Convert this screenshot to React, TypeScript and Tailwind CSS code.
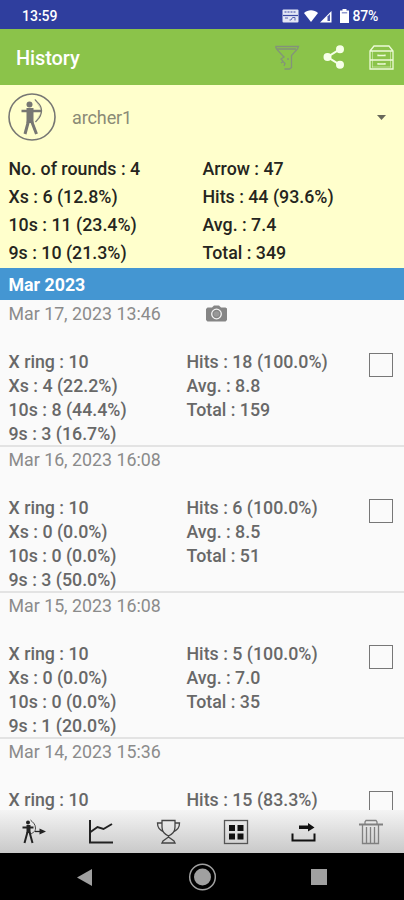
import type { ReactNode } from "react";

interface Round {
  date: string;
  photo?: boolean;
  left: string[];
  right: string[];
}

const rounds: Round[] = [
  {
    date: "Mar 17, 2023 13:46",
    photo: true,
    left: ["X ring : 10", "Xs : 4 (22.2%)", "10s : 8 (44.4%)", "9s : 3 (16.7%)"],
    right: ["Hits : 18 (100.0%)", "Avg. : 8.8", "Total : 159"],
  },
  {
    date: "Mar 16, 2023 16:08",
    left: ["X ring : 10", "Xs : 0 (0.0%)", "10s : 0 (0.0%)", "9s : 3 (50.0%)"],
    right: ["Hits : 6 (100.0%)", "Avg. : 8.5", "Total : 51"],
  },
  {
    date: "Mar 15, 2023 16:08",
    left: ["X ring : 10", "Xs : 0 (0.0%)", "10s : 0 (0.0%)", "9s : 1 (20.0%)"],
    right: ["Hits : 5 (100.0%)", "Avg. : 7.0", "Total : 35"],
  },
  {
    date: "Mar 14, 2023 15:36",
    left: ["X ring : 10"],
    right: ["Hits : 15 (83.3%)"],
  },
];

const summaryLeft = ["No. of rounds : 4", "Xs : 6 (12.8%)", "10s : 11 (23.4%)", "9s : 10 (21.3%)"];
const summaryRight = ["Arrow : 47", "Hits : 44 (93.6%)", "Avg. : 7.4", "Total : 349"];

function StatusBar() {
  return (
    <header className="flex h-[29px] shrink-0 items-center justify-between bg-[#2f3e9e] pt-[3px] pr-[26px] pl-[22px] text-[14px] font-medium text-white">
      <span>13:59</span>
      <div className="flex items-center">
        <svg className="mt-[-1px] h-[14px] w-[17px]" viewBox="0 0 17 14">
          <rect x=".5" y=".5" width="16" height="13" rx="1" fill="#e4e7f5" />
          <path d="M2.500 3h12" stroke="#6f79bd" strokeWidth="1.500" strokeDasharray="2 1" />
          <path d="M1 6.500h15" stroke="#3c4aa4" strokeWidth="1.200" />
          <path d="M3 9h3M7.500 11h1.500l1.500-2.500h2.500v3" stroke="#5863b2" fill="none" />
        </svg>
        <svg className="ml-[5px] h-[13px] w-[28px]" viewBox="0 0 28 13">
          <path d="M0 3C4-.8 10-.8 14 3L7 12Z" fill="#fff" />
          <path d="M16 12.500 27.500 1v11.500Z" fill="#fff" />
          <path d="M23.500 6.500v4.500h2.500V4Z" fill="#4b58ab" />
        </svg>
        <svg className="ml-[8px] h-[14px] w-[9px]" viewBox="0 0 9 14">
          <path d="M2.500 0h4v1.500H9V14H0V1.500h2.500Z" fill="#fff" />
          <path d="M1.800 3h5.400v1.500H1.800z" fill="#929bd0" />
        </svg>
        <span className="ml-[3px] tracking-[-0.2px]">87%</span>
      </div>
    </header>
  );
}

function Toolbar() {
  return (
    <div className="flex h-[56px] shrink-0 items-center bg-[#8bc34a] pr-[10px] pl-4">
      <h1 className="mt-[1px] grow text-[20px] font-medium tracking-[-0.1px] text-white">History</h1>
      <svg className="h-[25px] w-[26px]" viewBox="0 0 26 25" fill="none" stroke="#83937a" strokeWidth="1.300">
        <path d="M1.500 1.500h23l-1 2.500-6 6.500v12l-2 1.500h-5M1.500 1.500l1 2.500 5.500 6M3 4h19" />
        <path d="M8 10l2 2-3 2 2 2M7 18l2-1.500 2 2-1 2.500M14 13v2" />
      </svg>
      <svg className="ml-[23px] h-[24px] w-[21px]" viewBox="0 0 21 24" fill="#f6ffe8" stroke="#f6ffe8" strokeWidth="2">
        <path d="M17 4.200 4.500 12 17 19.800" fill="none" />
        <circle cx="17" cy="4.200" r="3" />
        <circle cx="4.500" cy="12" r="3" />
        <circle cx="17" cy="19.800" r="3" />
      </svg>
      <svg className="ml-[25px] h-[25px] w-[25px]" viewBox="0 0 25 25" fill="none" stroke="#edfad8" strokeWidth="1.300">
        <path d="M1 6 5 1h15l4 5v18H1ZM1 6h23M1 15h23" />
        <path d="M3.500 6v16.500M21.500 6v16.500M3 22h19" strokeWidth=".5" />
        <path d="M9 9.500v1h7v-1M9 18v1h7v-1" />
      </svg>
    </div>
  );
}

function Summary() {
  return (
    <section className="h-[183px] shrink-0 bg-[#ffffcc]">
      <div className="flex h-[70px] items-center pr-[18px] pl-2">
        <svg className="mt-[-7px] h-[48px] w-[48px]" viewBox="0 0 48 48" fill="none" stroke="#777773">
          <circle cx="24" cy="24" r="23" strokeWidth="1.600" />
          <circle cx="21.500" cy="11.500" r="3" fill="#777773" stroke="none" />
          <path d="M18.500 15h7v15h-7Z" fill="#777773" stroke="none" />
          <path d="M13.500 18H34" strokeWidth="2.500" />
          <path d="M20.500 28 17 41M23.500 28 28.500 41" strokeWidth="3" />
          <path d="M27 6.500c1 2.500 6.500 4 6.500 11S30 26 27.500 29" strokeWidth="1.200" />
          <path d="M27 6.500 34 18 27.500 29" strokeWidth=".3" />
        </svg>
        <span className="mt-[-6px] ml-[16px] grow text-[18px] tracking-[-0.1px] text-[#8b8b76]">archer1</span>
        <svg className="mt-[-5px] h-[5px] w-[9px]" viewBox="0 0 9 5">
          <path d="M0 0h9L4.500 5Z" fill="#68685a" />
        </svg>
      </div>
      <div className="flex pl-[8.500px] text-[17.800px] leading-[28px] font-medium text-[#252520]">
        <div className="w-[194px]">
          {summaryLeft.map((t) => <p key={t}>{t}</p>)}
        </div>
        <div>
          {summaryRight.map((t) => <p key={t}>{t}</p>)}
        </div>
      </div>
    </section>
  );
}

function RoundRow({ round }: { round: Round }) {
  return (
    <li className="h-[146.100px] border-b-2 border-[#e3e3e3] pl-[8.500px] text-[17.800px] text-[#686868]">
      <div className="flex h-[26px] items-center text-[#8b8b8b]">
        <span className="w-[197px]">{round.date}</span>
        {round.photo && (
          <svg className="mt-[-2px] h-[17px] w-[21px]" viewBox="0 0 21 17">
            <path d="M6 2.500 8 .5h5l2 2h4.500l1.500 1V15l-1.500 1.500h-18L0 15V4l1.500-1.500Z" fill="#858585" />
            <circle cx="10.500" cy="9" r="4.800" fill="#858585" stroke="#f3f3f3" strokeWidth="1.300" />
            <circle cx="10.500" cy="9" r="2.800" fill="#999" />
          </svg>
        )}
      </div>
      <div className="mt-[23px] flex leading-[24.100px] font-medium">
        <div className="w-[178px]">
          {round.left.map((t) => <p key={t}>{t}</p>)}
        </div>
        <div className="grow">
          {round.right.map((t) => <p key={t}>{t}</p>)}
        </div>
        <span className="mt-[3px] mr-[11px] h-[24px] w-[24px] border-[1.500px] border-[#777]" />
      </div>
    </li>
  );
}

function Tab({ label, children }: { label: string; children: ReactNode }) {
  return (
    <button aria-label={label} className="flex grow basis-0 items-center justify-center">
      <svg className="h-[26px] w-[26px]" viewBox="0 0 26 26" fill="none" stroke="#222">
        {children}
      </svg>
    </button>
  );
}

function BottomBar() {
  return (
    <nav className="flex h-[43px] shrink-0 bg-linear-to-b from-[#f4f4f4] to-[#c9c9c9]">
      <Tab label="Shoot">
        <circle cx="7" cy="3.500" r="2" fill="#222" stroke="none" />
        <path d="M5.500 6h4v8h-4z" fill="#222" stroke="none" />
        <path d="M1.500 8.500h11" strokeWidth="2" />
        <path d="M6.500 13 3.500 24M8.500 13l3 11" strokeWidth="2" />
        <path d="M9.500 1c2 2 5 4 5 8s-2 4-4.500 6" strokeWidth=".8" />
        <path d="M14 12.500h6" strokeWidth="1.300" />
        <path d="M18.500 9.500v6l6.500-3Z" fill="#222" stroke="none" />
      </Tab>
      <Tab label="Chart">
        <path d="M2 1v22.500h23" strokeWidth="2" />
        <path d="m2.500 13 7-5 6 2L24 5" strokeWidth="2" />
      </Tab>
      <Tab label="Trophy">
        <path d="M7 1.500h13v6.500c0 4-2 7-6.500 9-4.500-2-6.500-5-6.500-9ZM7 4H2.500c0 5 2 6.500 6 9M20 4h4.500c0 5-2 6.500-6 9M13.500 16v3M7 24l1-2 5.500-4 5.500 4 1 2Z" strokeWidth="1.300" stroke="#444" />
      </Tab>
      <Tab label="Grid">
        <rect x="1.500" y="1.500" width="23" height="23" stroke="#555" strokeWidth="1.300" />
        <path d="M6 6h6v6H6zM14.500 6h6v6h-6zM6 14.500h6v6H6zM14.500 14.500h6v6h-6z" fill="#111" stroke="none" />
      </Tab>
      <Tab label="Export">
        <path d="M2.500 14.500v7h22v-7" strokeWidth="2" stroke="#111" />
        <path d="M9 6.500h9V4l6.500 4.500-6.500 4V10H9Z" fill="#111" stroke="none" />
      </Tab>
      <Tab label="Delete">
        <path d="M8 5V3l1-1.500h10L20 3v2M5.500 6v18.500h16V6M9.500 8v16M13.500 8v16M17.500 8v16" strokeWidth="1.300" stroke="#808080" />
        <path d="M2 5.500h24" strokeWidth="2" stroke="#808080" />
      </Tab>
    </nav>
  );
}

function NavigationBar() {
  return (
    <div className="flex h-[47px] shrink-0 items-center justify-between bg-black pt-[1px] pr-[77px] pl-[77px]">
      <svg className="h-[17px] w-[15px]" viewBox="0 0 15 17"><path d="M0 8.500 15 0v17Z" fill="#a0a0a0" /></svg>
      <svg className="h-[28px] w-[28px]" viewBox="0 0 28 28">
        <circle cx="14.500" cy="14" r="12.800" fill="none" stroke="#a0a0a0" strokeWidth="1.500" />
        <circle cx="14.500" cy="14" r="8.500" fill="#a0a0a0" />
      </svg>
      <span className="h-[16px] w-[16px] bg-[#a0a0a0]" />
    </div>
  );
}

export default function App() {
  return (
    <main className="flex h-[900px] w-[404px] flex-col overflow-hidden bg-[#fafafa] font-['Roboto',sans-serif]">
      <StatusBar />
      <Toolbar />
      <Summary />
      <h2 className="flex h-[32px] shrink-0 items-center bg-[#4496d2] pt-[3px] pl-[8.500px] text-[17.800px] font-bold text-white">
        Mar 2023
      </h2>
      <ul className="min-h-0 grow overflow-hidden pt-[1px]">
        {rounds.map((r) => <RoundRow key={r.date} round={r} />)}
      </ul>
      <BottomBar />
      <NavigationBar />
    </main>
  );
}
